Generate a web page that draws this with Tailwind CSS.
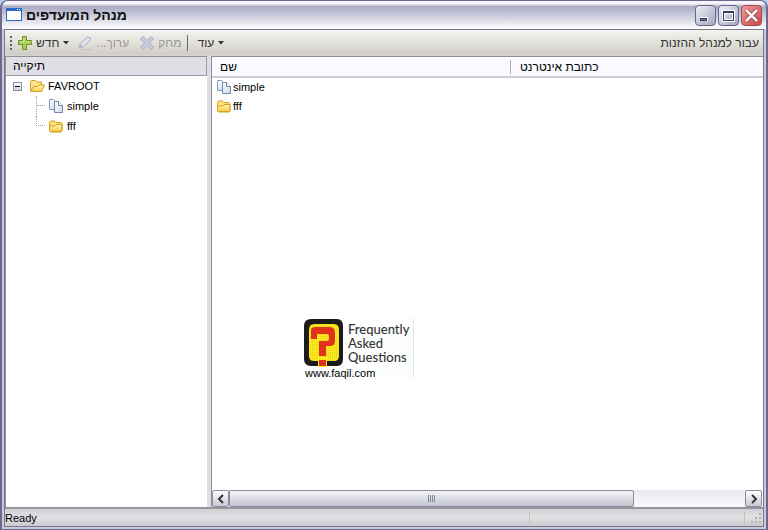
<!DOCTYPE html>
<html lang="he">
<head>
<meta charset="utf-8">
<meta name="viewport" content="width=device-width, initial-scale=1">
<title>מנהל המועדפים</title>
<script src="https://cdn.jsdelivr.net/npm/@tailwindcss/browser@4"></script>
</head>
<body class="bg-[#b5cdf0] font-['Liberation_Sans',sans-serif] text-[12px] leading-4 text-black">
<svg class="absolute size-0" aria-hidden="true">
  <defs>
    <linearGradient id="gold" x1="0" y1="0" x2="0" y2="1"><stop offset="0" stop-color="#fff6b8"/><stop offset="1" stop-color="#f8cb45"/></linearGradient>
    <linearGradient id="sheet" x1="0" y1="0" x2="1" y2="1"><stop offset="0" stop-color="#ffffff"/><stop offset="1" stop-color="#c9d9ec"/></linearGradient>
    <pattern id="dots" width="2" height="2" patternUnits="userSpaceOnUse"><rect width="2" height="2" fill="#fcea1c"/><rect width="1" height="1" fill="#e6cf18"/></pattern>
    <symbol id="pages" viewBox="0 0 16 16">
      <path d="M1.500 1.500h4l3 3v7h-7z" fill="url(#sheet)" stroke="#8399b8"/>
      <path d="M6.500 3.500h4l4 4v7h-8z" fill="url(#sheet)" stroke="#7088ab"/>
      <path d="M10.500 3.500v4h4" fill="#fff" stroke="#7088ab"/>
    </symbol>
    <symbol id="folder" viewBox="0 0 16 16">
      <path d="M1.500 12.500V4.500l1-1.500h4l1.500 1.500h5l1 1v7.500l-1 1H2.500z" fill="#fbe27a" stroke="#d3a021"/>
      <path d="M2.500 13.500l-1-1V8h5l1.500-1.500h6v6l-1 1z" fill="url(#gold)" stroke="#d3a021"/>
    </symbol>
    <symbol id="folder-open" viewBox="0 0 16 16">
      <path d="M1.500 12.500V4l1-1.500h4L8 4h4.500v3" fill="#fbe48b" stroke="#d3a021"/>
      <path d="M1.500 13.500l3-5h4L10 7h5.500l-3 6.500z" fill="url(#gold)" stroke="#d3a021"/>
    </symbol>
  </defs>
</svg>
<div class="flex h-screen flex-col overflow-hidden rounded-t-lg border-x-2 border-y border-[#6c6a8c] bg-[#c9c9dc]">
  <header class="flex h-7 shrink-0 items-center gap-1 bg-linear-to-b from-[#f4f4fa] from-10% via-[#aaaac4] via-20% to-white px-1">
    <svg class="h-4 w-4 shrink-0" viewBox="0 0 16 16" shape-rendering="crispEdges"><rect x="0" y="1" width="16" height="13" fill="#2969c9"/><rect x="1" y="4" width="14" height="9" fill="#fff"/><path d="M11 2h1v1h-1zM13 2h1v1h-1z" fill="#fff"/></svg>
    <h1 dir="rtl" class="text-[14px] leading-5 font-bold text-[#111]">מנהל המועדפים</h1>
    <div class="ml-auto flex gap-0.5">
      <button aria-label="מזער" class="flex size-[21px] items-center justify-center rounded border border-[#66668c] bg-linear-to-br from-[#f1f1f8] to-[#a4a4c2]"><svg class="size-[19px]" viewBox="0 0 19 19" shape-rendering="crispEdges"><path d="M4 11h8v4H4z" fill="#fff"/><path d="M4 12h7v3H4z" fill="#383760"/><path d="M5 13h5v1H5z" fill="#77769c"/></svg></button>
      <button aria-label="הגדל" class="flex size-[21px] items-center justify-center rounded border border-[#66668c] bg-linear-to-br from-[#f1f1f8] to-[#a4a4c2]"><svg class="size-[19px]" viewBox="0 0 19 19" fill="none" shape-rendering="crispEdges"><path d="M3.500 4.500h12v11h-12z" stroke="#fff" stroke-width="1"/><path d="M4.500 5.500h10v9h-10z" stroke="#383760"/><path d="M5.500 7.500h8v6h-8z" stroke="#fff"/><path d="M4 5h11v2H4z" fill="#383760"/></svg></button>
      <button aria-label="סגור" class="flex size-[21px] items-center justify-center rounded border border-[#a34a58] bg-linear-to-br from-[#ef9a98] to-[#c9474c]"><svg class="size-[19px]" viewBox="0 0 19 19"><path d="M4 4l11 11M15 4L4 15" stroke="#8e3038" stroke-width="4"/><path d="M4 4l11 11M15 4L4 15" stroke="#fff" stroke-width="2.500"/></svg></button>
    </div>
  </header>
  <div class="mx-0.5 mb-0.5 flex min-h-0 flex-1 flex-col border border-[#77778f] bg-[#dedee3]">
    <nav class="flex h-[26px] shrink-0 items-center border-b border-[#d8d6d0] bg-linear-to-b from-[#f4f4ef] to-[#cfcdc5] px-1 text-[#333]">
      <svg class="mr-1 h-4 w-1" viewBox="0 0 4 16" shape-rendering="crispEdges"><path d="M1 1h2v2H1zM1 5h2v2H1zM1 9h2v2H1zM1 13h2v2H1z" fill="#62617a"/></svg>
      <button class="flex items-center gap-[3px]"><svg class="size-4" viewBox="0 0 16 16"><path d="M5.500 1.500h4v4h5v4h-5v5h-4v-5h-4v-4h4z" fill="#a8cc52" stroke="#6c9426"/><path d="M7 3v4H3M9 7h4" fill="none" stroke="#d6eb98"/></svg><span>חדש</span><svg class="h-4 w-[7px]" viewBox="0 0 7 16"><path d="M1 6h6L4 9.500z" fill="#333"/></svg></button>
      <button disabled class="ml-2 flex items-center gap-[3px] text-[#9a9994]"><svg class="size-4" viewBox="0 0 16 16"><path d="M3 14.500h12" stroke="#c3c2cd"/><path d="M2 13l1-4 7-7 3.500 1L13 6l-7 6z" fill="#dfdfee" stroke="#b3b2cc"/><path d="M2 13l1-4 3 3z" fill="#b3b2cc"/></svg><span dir="rtl">ערוך...</span></button>
      <button disabled class="ml-2.5 flex items-center gap-[3px] text-[#9a9994]"><svg class="size-4" viewBox="0 0 16 16"><path d="M4 1.500l4 4 4-4 2.500 2.500-4 4 4 4-2.500 2.500-4-4-4 4L1.500 12l4-4-4-4z" fill="#c9c9df" stroke="#aaaac6"/></svg><span>מחק</span></button>
      <span class="mx-1.5 h-4 w-px bg-[#62628e]"></span>
      <button class="ml-[3px] flex items-center gap-[3px]"><span>עוד</span><svg class="h-4 w-[7px]" viewBox="0 0 7 16"><path d="M1 6h6L4 9.500z" fill="#333"/></svg></button>
      <a href="#" dir="rtl" class="ml-auto">עבור למנהל ההזנות</a>
    </nav>
    <main class="flex min-h-0 flex-1 gap-1">
      <aside class="w-[202px] shrink-0 border-t border-l border-[#8e8e9c] bg-white">
        <h2 class="flex h-[19px] items-center border-r border-b border-[#9c9ba8] bg-[#e0dfe5] px-[7px]">תיקייה</h2>
        <ul class="px-[7px] text-[11px] leading-5">
          <li>
            <div class="flex h-5 items-center gap-[3px]">
              <button aria-label="כווץ" class="mr-1 flex size-[9px] items-center justify-center border border-[#8490a6] bg-linear-to-b from-white to-[#d4d3dc]"><span class="h-px w-[5px] bg-black"></span></button>
              <svg class="size-4"><use href="#folder-open"/></svg><span>FAVROOT</span>
            </div>
            <ul class="ml-[23px]">
              <li class="flex h-5 items-center gap-[3px]"><span class="h-full w-[9px] border-l border-dotted border-[#aaa79a]"><span class="block h-1/2 w-2 border-b border-dotted border-[#aaa79a]"></span></span><svg class="size-4"><use href="#pages"/></svg><span>simple</span></li>
              <li class="flex h-5 items-start gap-[3px]"><span class="h-2.5 w-[9px] border-b border-l border-dotted border-[#aaa79a]"></span><svg class="mt-0.5 size-4"><use href="#folder"/></svg><span>fff</span></li>
            </ul>
          </li>
        </ul>
      </aside>
      <section class="flex min-w-0 flex-1 flex-col border-t border-l border-[#8e8e9c] bg-white">
        <table class="w-full table-fixed border-collapse">
          <colgroup><col class="w-[299px]"><col></colgroup>
          <thead>
            <tr class="h-5 border-b-2 border-[#ccccdc] bg-[#f9faff] text-left"><th class="p-0 font-normal"><div class="flex h-[14px] items-center border-r border-[#aaaac4] px-2">שם</div></th><th class="p-0 px-[9px] font-normal">כתובת אינטרנט</th></tr>
          </thead>
          <tbody class="text-[11px]">
            <tr class="h-[19px]"><td class="p-0 px-1"><div class="flex items-center gap-px"><svg class="size-4"><use href="#pages"/></svg>simple</div></td><td></td></tr>
            <tr class="h-[19px]"><td class="p-0 px-1"><div class="flex items-center gap-px"><svg class="size-4"><use href="#folder"/></svg>fff</div></td><td></td></tr>
          </tbody>
        </table>
        <div class="flex flex-1 items-end pb-[112px] pl-[92px]">
          <figure class="h-[60px] w-[110px] border-r border-[#dce6ee] bg-[#fdfefe]">
            <div class="flex gap-1">
              <svg class="h-[49px] w-10 shrink-0" viewBox="0 0 40 49"><path d="M7 1h26q6 0 6 7v33q0 7-6 7H7q-7 0-7-7V8q0-7 7-7z" fill="#1d1c1a"/><path d="M10 6h20q5 0 5 6v26q0 5-5 5H10q-5 0-5-5V12q0-6 5-6z" fill="url(#dots)"/><path d="M7 11q1-2 4-2h15q5 0 5 6v8q0 5-5 5h-4v10h-7V23h8q2 0 2-2v-3q0-2-2-2H13v5H7z" fill="#e3321c"/><path d="M14 40h9v9h-9z" fill="#fcea1c"/><path d="M15 42h7v6h-7z" fill="#e3321c"/></svg>
              <p class="pt-1 font-['Lato',sans-serif] text-[13px] leading-[14px] font-medium text-[#333]">Frequently<br>Asked<br>Questions</p>
            </div>
            <figcaption class="pl-px text-[11px] leading-3">www.faqil.com</figcaption>
          </figure>
        </div>
        <div class="mr-px flex h-[17px] shrink-0 bg-linear-to-b from-[#e8e8ee] to-[#fbfbfe]">
          <button aria-label="גלול שמאלה" class="flex w-[17px] items-center justify-center rounded-xs border border-[#8b8b9c] bg-linear-to-b from-white to-[#c9c9d8]"><svg class="h-2.5 w-2" viewBox="0 0 8 10" fill="none"><path d="M6 1L2 5l4 4" stroke="#333" stroke-width="2"/></svg></button>
          <div class="flex h-full min-w-0 flex-1"><div class="flex h-full w-[78.500%] items-center justify-center gap-px rounded-xs border border-[#8b8b9c] bg-linear-to-b from-[#f4f4f8] to-[#c5c5d2]"><span class="h-[7px] w-px bg-[#7d8597]"></span><span class="h-[7px] w-px bg-[#7d8597]"></span><span class="h-[7px] w-px bg-[#7d8597]"></span><span class="h-[7px] w-px bg-[#7d8597]"></span></div></div>
          <button aria-label="גלול ימינה" class="flex w-[17px] items-center justify-center rounded-xs border border-[#8b8b9c] bg-linear-to-b from-white to-[#c9c9d8]"><svg class="h-2.5 w-2" viewBox="0 0 8 10" fill="none"><path d="M2 1l4 4-4 4" stroke="#333" stroke-width="2"/></svg></button>
        </div>
      </section>
    </main>
    <footer class="flex h-[19px] shrink-0 items-center border-t-2 border-[#96959c] bg-linear-to-b from-[#d0d0d5] via-[#e0e0e5] to-[#c9c9ce]">
      <span class="flex-1 text-[11px]">Ready</span>
      <span class="h-3 w-[216px] border-x border-[#c4c2ae]"></span>
      <svg class="ml-1 size-[14px]" viewBox="0 0 14 14" shape-rendering="crispEdges"><path d="M10 2h2v2h-2zM6 6h2v2H6zM10 6h2v2h-2zM2 10h2v2H2zM6 10h2v2H6zM10 10h2v2h-2z" fill="#b4b1a2"/></svg>
    </footer>
  </div>
</div>
</body>
</html>
